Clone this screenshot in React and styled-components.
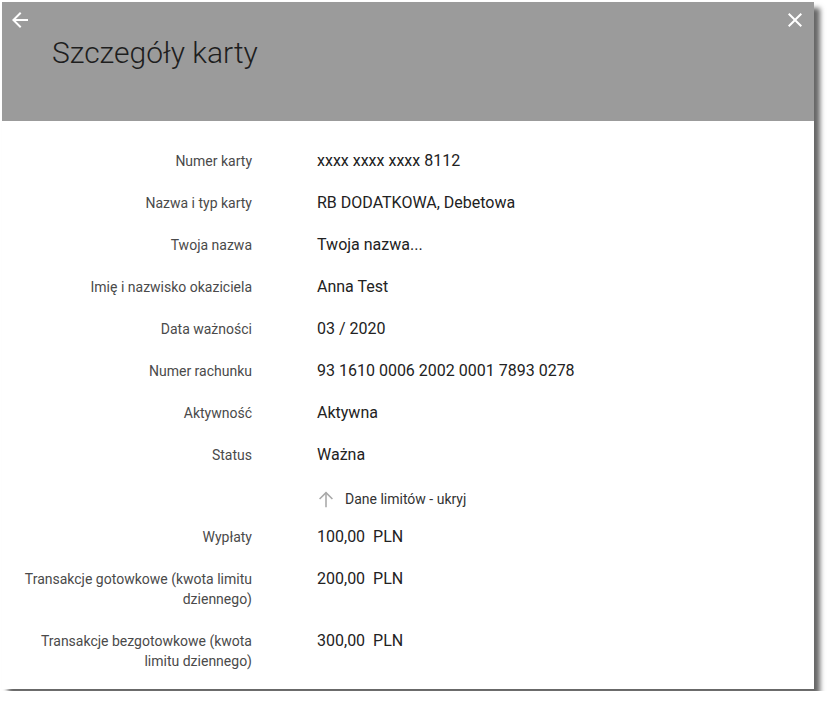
import React from 'react';
import styled, { createGlobalStyle } from 'styled-components';

const GlobalStyle = createGlobalStyle`
  html, body {
    margin: 0;
    padding: 0;
    background: #fff;
  }
  body {
    font-family: Roboto, "Noto Sans", Arial, sans-serif;
  }
`;

const Page = styled.div`
  padding: 2px;
`;

const Dialog = styled.div`
  width: 812px;
  background: #fff;
  box-shadow: 6px 6px 5px rgba(0, 0, 0, 0.6);
`;

const Header = styled.div`
  height: 119px;
  box-sizing: border-box;
  background: #9b9b9b;
  padding: 6px 7px 0 6px;
`;

const Toolbar = styled.div`
  display: flex;
  justify-content: space-between;
  height: 24px;
`;

const IconButton = styled.button`
  width: 24px;
  height: 24px;
  padding: 0;
  border: 0;
  background: none;
  display: flex;
  cursor: pointer;
`;

const Title = styled.h1`
  margin: 3px 0 0 44px;
  font-size: 30px;
  line-height: 36px;
  font-weight: 300;
  color: #1e1e1e;
`;

const Body = styled.div`
  padding: 19px 0 7px;
`;

const Row = styled.div`
  display: grid;
  grid-template-columns: 232px 1fr;
  column-gap: 65px;
  align-items: start;
  padding: ${p => (p.$toggle ? '13px 0 7px' : '11px 0')};
  padding-left: 18px;
`;

const Label = styled.div`
  text-align: right;
  font-size: 14px;
  line-height: 20px;
  color: #4a4a4a;
`;

const Value = styled.div`
  font-size: 16px;
  line-height: 20px;
  color: #222;
`;

const Toggle = styled.button`
  display: flex;
  align-items: center;
  gap: 8px;
  padding: 0;
  margin: 0 0 0 -2px;
  border: 0;
  background: none;
  font-family: inherit;
  font-size: 14px;
  line-height: 20px;
  color: #333;
  cursor: pointer;
  height: 20px;
`;

const BackIcon = () => (
  <svg width="24" height="24" viewBox="0 0 24 24">
    <path fill="#fff" d="M20 11H7.83l5.59-5.59L12 4l-8 8 8 8 1.41-1.41L7.83 13H20v-2z" />
  </svg>
);

const CloseIcon = () => (
  <svg width="24" height="24" viewBox="0 0 24 24">
    <path
      fill="#fff"
      d="M19 6.41L17.59 5 12 10.59 6.41 5 5 6.41 10.59 12 5 17.59 6.41 19 12 13.41 17.59 19 19 17.59 13.41 12z"
    />
  </svg>
);

const ArrowUp = () => (
  <svg width="22" height="22" viewBox="0 0 24 24" fill="none" stroke="#a8a8a8" strokeWidth="1.7">
    <path d="M12 21V5" />
    <path d="M5 12l7-7 7 7" />
  </svg>
);

const details = [
  ['Numer karty', 'xxxx xxxx xxxx 8112'],
  ['Nazwa i typ karty', 'RB DODATKOWA, Debetowa'],
  ['Twoja nazwa', 'Twoja nazwa...'],
  ['Imię i nazwisko okaziciela', 'Anna Test'],
  ['Data ważności', '03 / 2020'],
  ['Numer rachunku', '93 1610 0006 2002 0001 7893 0278'],
  ['Aktywność', 'Aktywna'],
  ['Status', 'Ważna'],
];

const limits = [
  ['Wypłaty', '100,00\u00a0 PLN'],
  ['Transakcje gotowkowe (kwota limitu dziennego)', '200,00\u00a0 PLN'],
  ['Transakcje bezgotowkowe (kwota limitu dziennego)', '300,00\u00a0 PLN'],
];

export default function App() {
  return (
    <Page>
      <GlobalStyle />
      <Dialog>
        <Header>
          <Toolbar>
            <IconButton aria-label="Wstecz"><BackIcon /></IconButton>
            <IconButton aria-label="Zamknij"><CloseIcon /></IconButton>
          </Toolbar>
          <Title>Szczegóły karty</Title>
        </Header>
        <Body>
          {details.map(([label, value]) => (
            <Row key={label}>
              <Label>{label}</Label>
              <Value>{value}</Value>
            </Row>
          ))}
          <Row $toggle>
            <span />
            <Toggle>
              <ArrowUp />
              Dane limitów - ukryj
            </Toggle>
          </Row>
          {limits.map(([label, value]) => (
            <Row key={label}>
              <Label>{label}</Label>
              <Value>{value}</Value>
            </Row>
          ))}
        </Body>
      </Dialog>
    </Page>
  );
}
